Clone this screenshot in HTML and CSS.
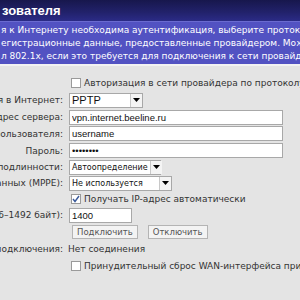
FILE: index.html
```html
<!DOCTYPE html>
<html lang="ru">
<head>
    <meta charset="UTF-8">
    <title>Пользователь</title>
    <link rel="stylesheet" href="styles.css">
</head>
<body>
    <div class="title">зователя</div>
    <div class="intro">
        <div class="line">я к Интернету необходима аутентификация, выберите протокол</div>
        <div class="line">егистрационные данные, предоставленные провайдером. Можно</div>
        <div class="line">л 802.1x, если это требуется для подключения к сети провайдера</div>
    </div>

    <div class="form">
        <div class="label"></div>
        <div class="field"><label class="check"><span class="box"></span>Авторизация в сети провайдера по протоколу 802.1x</label></div>

        <div class="label"><span>Тип подключения в Интернет:</span></div>
        <div class="field">
            <div class="select w-pptp"><span>PPTP</span><span class="arrow"><svg width="7" height="4" viewBox="0 0 7 4"><path d="M0 0h7L3.5 4z" fill="#000"/></svg></span></div>
        </div>

        <div class="label"><span>Адрес сервера:</span></div>
        <div class="field"><input class="text wide" type="text" value="vpn.internet.beeline.ru"></div>

        <div class="label"><span>Имя пользователя:</span></div>
        <div class="field"><input class="text wide" type="text" value="username"></div>

        <div class="label"><span>Пароль:</span></div>
        <div class="field"><input class="text wide" type="password" value="password"></div>

        <div class="label"><span>Метод проверки подлинности:</span></div>
        <div class="field">
            <div class="select w-auth"><span>Автоопределение</span><span class="arrow"><svg width="7" height="4" viewBox="0 0 7 4"><path d="M0 0h7L3.5 4z" fill="#000"/></svg></span></div>
        </div>

        <div class="label"><span>Шифрование данных (MPPE):</span></div>
        <div class="field">
            <div class="select w-mppe"><span>Не используется</span><span class="arrow"><svg width="7" height="4" viewBox="0 0 7 4"><path d="M0 0h7L3.5 4z" fill="#000"/></svg></span></div>
        </div>

        <div class="label"></div>
        <div class="field"><label class="check"><span class="box"><svg width="8" height="8" viewBox="0 0 8 8"><path d="M1 4l2 2.5L7 1" fill="none" stroke="#3a5a9a" stroke-width="1.4"/></svg></span>Получать IP-адрес автоматически</label></div>

        <div class="label"><span>Размер MTU (576–1492 байт):</span></div>
        <div class="field"><input class="text mtu" type="text" value="1400"></div>

        <div class="label"></div>
        <div class="field buttons">
            <button class="btn">Подключить</button>
            <button class="btn">Отключить</button>
        </div>

        <div class="label"><span>Состояние подключения:</span></div>
        <div class="field status">Нет соединения</div>

        <div class="label"></div>
        <div class="field"><label class="check"><span class="box"></span>Принудительный сброс WAN-интерфейса при разрыве</label></div>
    </div>
</body>
</html>
```

FILE: styles.css
```css
body {
    margin: 0;
    padding: 0;
    width: 300px;
    height: 300px;
    overflow: hidden;
    background: #e4e4e4;
    font-family: "DejaVu Sans", Verdana, sans-serif;
    font-size: 9px;
    color: #333;
}

.title {
    height: 21px;
    line-height: 22px;
    padding-left: 2px;
    font-family: "Liberation Sans", Arial, sans-serif;
    font-size: 13px;
    font-weight: bold;
    color: #fff;
    background: linear-gradient(#17174c, #22226c 60%, #2b2b86);
    border-bottom: 1px solid #6a6ad0;
}

.intro {
    background: #5252c2;
    padding: 2px 0 1px 1px;
    border-bottom: 2px solid #f2f2f2;
}

.intro .line {
    height: 13px;
    line-height: 13px;
    white-space: nowrap;
    overflow: hidden;
    color: #fff;
}

.form {
    display: grid;
    grid-template-columns: 63px 1fr;
    grid-template-rows: 17px 18px 16px 17px 17px 16px 16px 16px 16px 18px 16px 17px;
    column-gap: 6px;
    padding-top: 8px;
    align-items: center;
}

.label {
    display: flex;
    justify-content: flex-end;
    overflow: hidden;
    white-space: nowrap;
    height: 100%;
    align-items: center;
}

.field {
    display: flex;
    align-items: center;
    white-space: nowrap;
    overflow: hidden;
    height: 100%;
}

.check {
    display: flex;
    align-items: center;
    gap: 3px;
    color: #333;
}

.box {
    box-sizing: border-box;
    width: 10px;
    height: 10px;
    margin-left: 2px;
    border: 1px solid #9a9a9a;
    background: #fff;
    display: flex;
    align-items: center;
    justify-content: center;
}

.text {
    box-sizing: border-box;
    height: 15px;
    margin: 0;
    padding: 0 2px;
    border: 1px solid #a8a8a8;
    background: #fff;
    font-family: "Liberation Sans", Arial, sans-serif;
    font-size: 9.5px;
    color: #111;
}

.wide {
    width: 214px;
}

.mtu {
    width: 63px;
}

.select {
    box-sizing: border-box;
    height: 15px;
    display: flex;
    align-items: center;
    gap: 2px;
    border: 1px solid #a8a8a8;
    background: #fff;
    padding-left: 2px;
    font-family: "Liberation Sans", Arial, sans-serif;
    font-size: 9.5px;
    color: #111;
}

.select .arrow {
    margin-left: auto;
    flex-shrink: 0;
    box-sizing: border-box;
    width: 12px;
    height: 13px;
    display: flex;
    align-items: center;
    justify-content: center;
    border-left: 1px solid #c8c8c8;
    background: #f4f4f4;
}

.w-pptp {
    width: 74px;
    font-size: 11px;
}

.w-auth {
    width: 92px;
    font-family: "DejaVu Sans", sans-serif;
    font-size: 8px;
}

.w-mppe {
    width: 103px;
    font-family: "DejaVu Sans", sans-serif;
    font-size: 8px;
}

.buttons {
    gap: 10px;
    padding-left: 3px;
}

.btn {
    height: 14px;
    padding: 0 4px;
    border: 1px solid #b4b4b4;
    background: #f3f3f3;
    color: #555;
    font-family: "DejaVu Sans", sans-serif;
    font-size: 8.5px;
    line-height: 12px;
}

.status {
    margin-left: -1px;
    color: #333;
}
```
